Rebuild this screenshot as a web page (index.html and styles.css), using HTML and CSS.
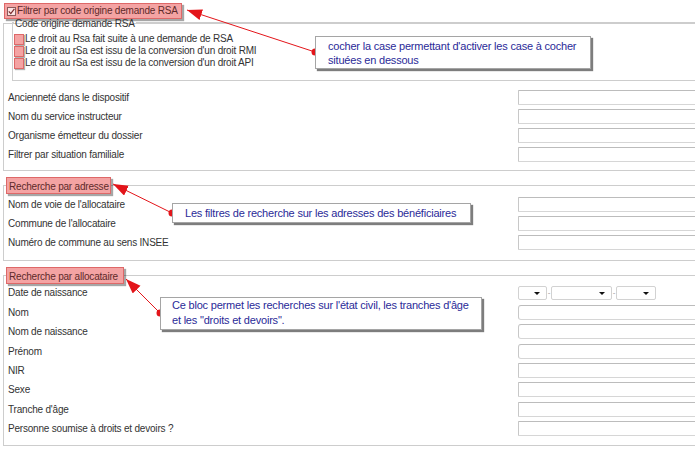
FILE: index.html
```html
<!DOCTYPE html>
<html lang="fr">
<head>
<meta charset="utf-8">
<title>Filtres</title>
<link rel="stylesheet" href="styles.css">
</head>
<body>
<div class="page">
  <div class="fs fs1">
    <div class="hl hl-head"><span class="chk"><svg width="7" height="7" viewBox="0 0 7 7"><path d="M0.8 3.4 L2.8 5.6 L6.4 0.8" fill="none" stroke="#7a2a2a" stroke-width="1.2"/></svg></span>Filtrer par code origine demande RSA</div>
    <fieldset class="inner">
      <legend>Code origine demande RSA</legend>
      <div class="opt"><span class="cbx"></span>Le droit au Rsa fait suite à une demande de RSA</div>
      <div class="opt"><span class="cbx"></span>Le droit au rSa est issu de la conversion d'un droit RMI</div>
      <div class="opt"><span class="cbx"></span>Le droit au rSa est issu de la conversion d'un droit API</div>
    </fieldset>
    <div class="rows rows1">
      <div class="row"><span class="lbl">Ancienneté dans le dispositif</span><span class="inp"></span></div>
      <div class="row"><span class="lbl">Nom du service instructeur</span><span class="inp"></span></div>
      <div class="row"><span class="lbl">Organisme émetteur du dossier</span><span class="inp"></span></div>
      <div class="row"><span class="lbl">Filtrer par situation familiale</span><span class="inp"></span></div>
    </div>
  </div>

  <fieldset class="fs fs2">
    <legend class="hl hl-leg">Recherche par adresse</legend>
    <div class="rows rows2">
      <div class="row"><span class="lbl">Nom de voie de l'allocataire</span><span class="inp"></span></div>
      <div class="row"><span class="lbl">Commune de l'allocataire</span><span class="inp"></span></div>
      <div class="row"><span class="lbl">Numéro de commune au sens INSEE</span><span class="inp"></span></div>
    </div>
  </fieldset>

  <fieldset class="fs fs3">
    <legend class="hl hl-leg">Recherche par allocataire</legend>
    <div class="rows rows3">
      <div class="row"><span class="lbl">Date de naissance</span>
        <span class="dates"><span class="sel s-day"></span><span class="dash">-</span><span class="sel s-month"></span><span class="dash">-</span><span class="sel s-year"></span></span>
      </div>
      <div class="row"><span class="lbl">Nom</span><span class="inp rnd"></span></div>
      <div class="row"><span class="lbl">Nom de naissance</span><span class="inp rnd"></span></div>
      <div class="row"><span class="lbl">Prénom</span><span class="inp rnd"></span></div>
      <div class="row"><span class="lbl">NIR</span><span class="inp"></span></div>
      <div class="row"><span class="lbl">Sexe</span><span class="inp"></span></div>
      <div class="row"><span class="lbl">Tranche d'âge</span><span class="inp"></span></div>
      <div class="row"><span class="lbl">Personne soumise à droits et devoirs ?</span><span class="inp"></span></div>
    </div>
  </fieldset>

  <svg class="arrows" width="695" height="449" viewBox="0 0 695 449">
    <defs>
      <marker id="ah" markerUnits="userSpaceOnUse" markerWidth="16" markerHeight="12" refX="15" refY="5.5" orient="auto">
        <path d="M0 0 L15 5.5 L0 11 Z" fill="#e3151a"/>
      </marker>
    </defs>
    <line x1="315" y1="52" x2="187" y2="10" stroke="#e3151a" stroke-width="1" marker-end="url(#ah)"/>
    <circle cx="315" cy="52" r="3.5" fill="#e3151a"/>
    <line x1="172" y1="213" x2="113" y2="184" stroke="#e3151a" stroke-width="1" marker-end="url(#ah)"/>
    <circle cx="172" cy="213" r="3.5" fill="#e3151a"/>
    <line x1="160" y1="313" x2="126" y2="279" stroke="#e3151a" stroke-width="1" marker-end="url(#ah)"/>
    <circle cx="160" cy="313" r="3.5" fill="#e3151a"/>
  </svg>

  <div class="callout c1">cocher la case permettant d'activer les case à cocher<br>situées en dessous</div>
  <div class="callout c2">Les filtres de recherche sur les adresses des bénéficiaires</div>
  <div class="callout c3">Ce bloc permet les recherches sur l'état civil, les tranches d'âge<br>et les "droits et devoirs".</div>
</div>
</body>
</html>
```

FILE: styles.css
```css
html, body {
  margin: 0;
  padding: 0;
  background: #fff;
  overflow: hidden;
}
body {
  font-family: "Liberation Sans", Arial, sans-serif;
  font-size: 10px;
  letter-spacing: -0.2px;
  color: #333;
  width: 695px;
  height: 449px;
}
.page {
  position: relative;
  display: flow-root;
  width: 695px;
  height: 449px;
  padding-left: 3px;
  box-sizing: border-box;
  overflow: hidden;
}
.fs {
  width: 760px;
  border: 1px solid #cdcdcd;
  box-sizing: border-box;
  margin: 0;
  min-width: 0;
}
.fs1 {
  margin-top: 23px;
  padding: 0 0 5px 4px;
  height: 148px;
}
fieldset.fs {
  padding: 0 0 0 4px;
  margin-top: 6px;
}
.fs2 { height: 84px; }
.fs3 { height: 179px; }

.hl {
  background: #f4a3a3;
  border: 1px solid #de6868;
  box-shadow: 2px 2px 1px rgba(0, 0, 0, 0.35);
  color: #5e2a2a;
  box-sizing: border-box;
  white-space: nowrap;
}
.hl-head {
  margin: -21px 0 0 -4px;
  width: 178px;
  height: 16px;
  line-height: 14px;
  padding-left: 2px;
  display: flex;
  align-items: center;
}
.chk {
  width: 7px;
  height: 7px;
  border: 1px solid #8c5a5a;
  background: #fbe3e3;
  margin-right: 1px;
  display: flex;
  align-items: center;
  justify-content: center;
}
.chk svg { display: block; }

.hl-leg {
  margin-left: -2px;
  padding: 3px 2px 0 2px;
  height: 17px;
  line-height: 12px;
}
.fs2 .hl-leg { width: 105px; }
.fs3 .hl-leg { width: 118px; }

.inner {
  margin: -4px 0 0 4px;
  padding: 3px 0 11px 1px;
  border: 1px solid #cdcdcd;
  min-width: 0;
}
.inner legend {
  padding: 3px 1px 0;
  line-height: 12px;
  margin-left: 0;
}
.opt {
  height: 12px;
  line-height: 12px;
  display: flex;
  align-items: center;
}
.cbx {
  width: 10px;
  height: 11px;
  box-sizing: border-box;
  background: #f4a3a3;
  border: 1px solid #de6868;
  box-shadow: 1px 1px 1px rgba(0, 0, 0, 0.3);
  margin-right: 1px;
  flex: none;
}

.rows1 { margin-top: 7px; }
.rows2 { margin-top: 1px; }
.rows3 { margin-top: -1px; }
.row {
  height: 19px;
  display: flex;
  align-items: center;
}
.rows3 .row { height: 19.45px; }
.lbl {
  width: 510px;
  flex: none;
}
.inp {
  width: 220px;
  height: 15px;
  box-sizing: border-box;
  border: 1px solid #d6d6d6;
  border-top-color: #bcbcbc;
  border-left-color: #c8c8c8;
  border-radius: 1px;
  background: #fff;
}
.inp.rnd { border-radius: 3px; }

.dates {
  display: flex;
  align-items: center;
}
.sel {
  position: relative;
  height: 14px;
  box-sizing: border-box;
  border: 1px solid #d2d2d2;
  border-radius: 2px;
  background: #fff;
}
.sel::after {
  content: "";
  position: absolute;
  right: 6px;
  top: 5px;
  border-left: 3px solid transparent;
  border-right: 3px solid transparent;
  border-top: 3px solid #111;
}
.s-day { width: 29px; }
.s-month { width: 61px; }
.s-year { width: 40px; }
.dash {
  width: 4px;
  text-align: center;
  color: #999;
  font-size: 8px;
}

.arrows {
  position: absolute;
  left: 0;
  top: 0;
  pointer-events: none;
}
.callout {
  position: absolute;
  background: #fff;
  border: 1px solid #a5a5a5;
  box-shadow: 2px 2px 1px #7d7d7d;
  color: #2a2a98;
  font-size: 11px;
  letter-spacing: -0.2px;
  box-sizing: border-box;
}
.c1 {
  left: 315px;
  top: 36px;
  width: 276px;
  height: 33px;
  padding: 2px 0 0 12px;
  line-height: 14px;
}
.c2 {
  left: 172px;
  top: 203px;
  width: 299px;
  height: 20px;
  padding: 0 0 0 12px;
  line-height: 18px;
}
.c3 {
  left: 160px;
  top: 297px;
  width: 322px;
  height: 33px;
  padding: 0 0 0 11px;
  line-height: 15px;
}
```
